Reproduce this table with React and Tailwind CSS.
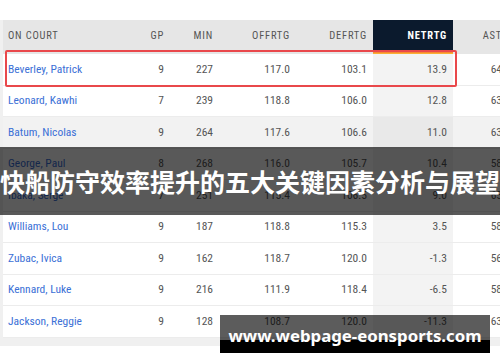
import React from 'react';

const rows = [
  ['Beverley, Patrick', 9, 227, '117.0', '103.1', '13.9', 64],
  ['Leonard, Kawhi', 7, 239, '118.8', '106.0', '12.8', 63],
  ['Batum, Nicolas', 9, 264, '117.6', '106.6', '11.0', 63],
  ['George, Paul', 8, 268, '116.0', '105.7', '10.4', 58],
  ['Ibaka, Serge', 7, 251, '115.4', '106.5', '9.0', 65],
  ['Williams, Lou', 9, 187, '118.8', '115.3', '3.5', 58],
  ['Zubac, Ivica', 9, 162, '118.7', '120.0', '-1.3', 56],
  ['Kennard, Luke', 9, 216, '111.9', '118.4', '-6.5', 58],
  ['Jackson, Reggie', 9, 128, '108.7', '120.0', '-11.3', 63],
];

const font = { fontFamily: '"Roboto Condensed", "Liberation Sans Narrow", "DejaVu Sans Condensed", Roboto, sans-serif' };

export default function App() {
  return (
    <div className="relative w-[500px] h-[362px] overflow-hidden bg-white">
      <div className="h-[20px]" />
      <div className="w-[520px] bg-[#f0f0f0] pl-[3px] pb-[8px] font-stretch-condensed" style={font}>
        {/* header */}
        <div className="flex h-[34px] border-b-2 border-[#e6e6e6] items-stretch bg-[#e6e6e6] text-[10.5px] tracking-[0.8px] text-[#555]">
          <div className="w-[117px] pl-[5px] flex items-center">ON COURT</div>
          <div className="w-[50px] pr-[6px] flex items-center justify-end">GP</div>
          <div className="w-[49px] pr-[6px] flex items-center justify-end">MIN</div>
          <div className="w-[77px] pr-[6px] flex items-center justify-end">OFFRTG</div>
          <div className="w-[77px] pr-[6px] flex items-center justify-end">DEFRTG</div>
          <div className="relative w-[80px] flex items-center justify-end pr-[6px] bg-[#0b1a2d] text-white font-bold">
            NETRTG
            <div className="absolute left-0 right-0 bottom-[-2px] h-[3px] bg-gradient-to-b from-[#ee4b2b] to-[#fbbf35]" />
          </div>
          <div className="w-[55px] pr-[6px] flex items-center justify-end">AST</div>
        </div>
        {/* body */}
        {rows.map((r, i) => (
          <div
            key={r[0]}
            className={`flex h-[31.5px] items-center border-b border-[#ececec] text-[11.5px] text-[#555] ${i === 2 ? 'bg-[#f2f2f2]' : 'bg-white'}`}
          >
            <div className="w-[117px] pl-[5px] text-[#3b70d6]">{r[0]}</div>
            <div className="w-[50px] pr-[6px] text-right">{r[1]}</div>
            <div className="w-[49px] pr-[6px] text-right">{r[2]}</div>
            <div className="w-[77px] pr-[6px] text-right">{r[3]}</div>
            <div className="w-[77px] pr-[6px] text-right">{r[4]}</div>
            <div className={`w-[80px] h-full flex items-center justify-end pr-[6px] ${i === 2 ? 'bg-[#e9e9e9]' : 'bg-[#f3f3f3]'}`}>{r[5]}</div>
            <div className="w-[55px] pr-[6px] text-right">{r[6]}</div>
          </div>
        ))}
      </div>

      {/* highlight box */}
      <div className="absolute left-[5px] top-[50px] w-[452px] h-[37px] border-[2.5px] border-[#e9484b] rounded-[2px]" />

      {/* title banner */}
      <div className="absolute left-0 top-[147px] w-[500px] h-[68px] flex items-center justify-center bg-[rgba(0,0,0,0.65)]">
        <span className="text-white font-bold text-[25px] leading-none whitespace-nowrap" style={{ fontFamily: '"Noto Sans CJK SC", "Noto Sans", sans-serif' }}>
          快船防守效率提升的五大关键因素分析与展望
        </span>
      </div>

      {/* watermark */}
      <div className="absolute left-[220px] top-[315px] w-[270px] h-[38px] flex flex-col">
        <div className="h-[25px] bg-[rgba(0,0,0,0.64)]" />
        <div className="h-[13px] bg-black" />
        <div className="absolute inset-0 flex items-end justify-center pb-[8px]">
          <span className="text-white font-bold text-[16.8px] leading-none whitespace-nowrap" style={{ fontFamily: '"Noto Sans", "Open Sans", sans-serif' }}>
            www.webpage-eonsports.com
          </span>
        </div>
      </div>
    </div>
  );
}
